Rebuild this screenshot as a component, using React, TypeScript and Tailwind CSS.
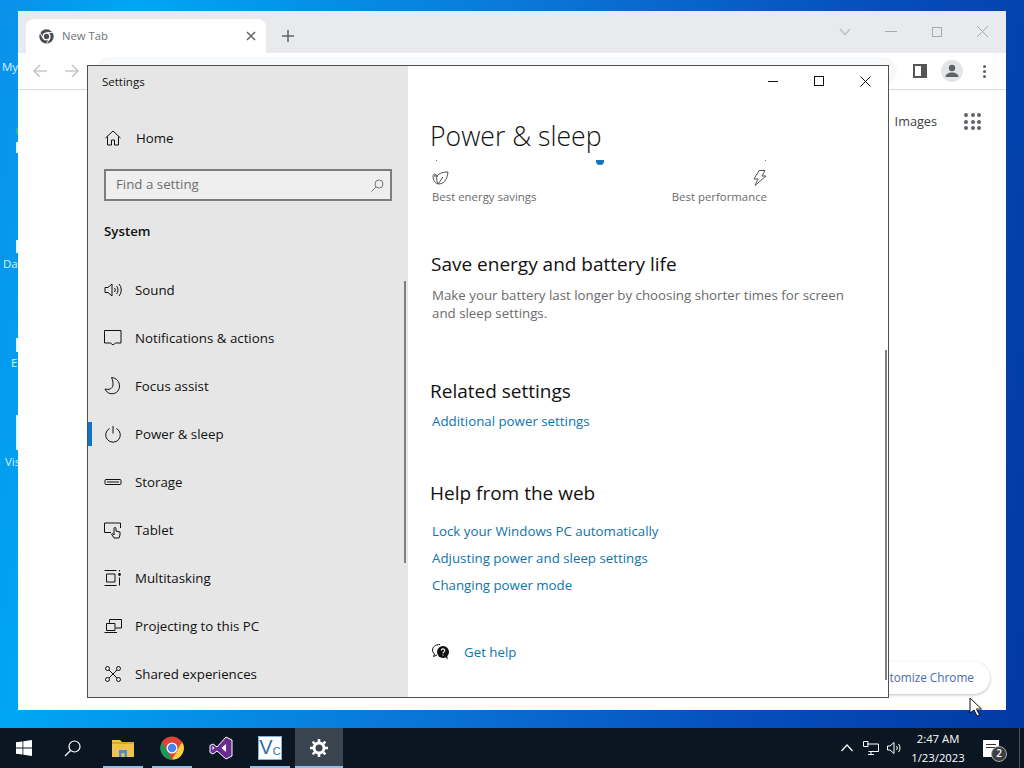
import React from "react";

const navItems = [
  { label: "Sound", icon: "sound" },
  { label: "Notifications & actions", icon: "notify" },
  { label: "Focus assist", icon: "moon" },
  { label: "Power & sleep", icon: "power", active: true },
  { label: "Storage", icon: "storage" },
  { label: "Tablet", icon: "tablet" },
  { label: "Multitasking", icon: "multi" },
  { label: "Projecting to this PC", icon: "project" },
  { label: "Shared experiences", icon: "shared" },
];

function NavIcon({ name }: { name: string }) {
  const common = { width: 18, height: 18, viewBox: "0 0 18 18", fill: "none", stroke: "#111", strokeWidth: 1 };
  switch (name) {
    case "sound":
      return (
        <svg {...common}>
          <path d="M1 6.500h3L8 3v12l-4-3.500H1z" />
          <path d="M10.500 7a3 3 0 0 1 0 4M12.500 5a6 6 0 0 1 0 8M15 3a9 9 0 0 1 0 12" />
        </svg>
      );
    case "notify":
      return (
        <svg {...common}>
          <path d="M.500 1.500h16.500v12.500h-5.500L9 16l-2.500-2H.500z" />
        </svg>
      );
    case "moon":
      return (
        <svg {...common}>
          <path d="M7.500 .500c5 .5 8 4 8 8.500a7.500 7.500 0 0 1-14.500 3c4 1 7.500 0 8-4 .3-2.500-.5-5.500-1.500-7.500z" />
        </svg>
      );
    case "power":
      return (
        <svg {...common}>
          <path d="M9 1v7.500M5.500 3.500a7.300 7.300 0 1 0 7 0" />
        </svg>
      );
    case "storage":
      return (
        <svg {...common}>
          <rect x="1" y="6.500" width="16" height="5" rx="1" />
          <path d="M3 9h12" strokeWidth="1" />
        </svg>
      );
    case "tablet":
      return (
        <svg {...common}>
          <path d="M7 11.500H.500v-9.500h16V7" />
          <path d="M10 17l-2.500-4 1-.5 1.500 1.500V7.500a1 1 0 0 1 2 0V10l4 1v3l-1 3z" fill="#e6e6e6" />
        </svg>
      );
    case "multi":
      return (
        <svg {...common}>
          <path d="M.500 1.500h12M.500 16.500h12M2.500 5h8.500v8H2.500zM15.500 8.500v8" />
          <circle cx="15.500" cy="5.500" r="1.400" fill="#111" stroke="none" />
          <path d="M15.500 1v1.500" />
        </svg>
      );
    case "project":
      return (
        <svg {...common}>
          <path d="M5.500 6V2.500h12v8.500h-6" />
          <path d="M2.500 6.500h8.500v7H2.500zM.500 15.500h12.500" />
        </svg>
      );
    default:
      return (
        <svg {...common}>
          <circle cx="3.500" cy="3.500" r="2" />
          <circle cx="14.500" cy="3.500" r="2" />
          <circle cx="3.500" cy="14.500" r="2" />
          <circle cx="14.500" cy="14.500" r="2" />
          <path d="M5 5l8 8M13 5l-8 8" />
        </svg>
      );
  }
}

function ChromeLogo({ size }: { size: number }) {
  return (
    <svg width={size} height={size} viewBox="0 0 48 48">
      <circle cx="24" cy="24" r="23" fill="#db4437" />
      <path d="M24 47A23 23 0 0 1 4 12.500L15 31l9 16z" fill="#0f9d58" />
      <path d="M24 47l11-19 9-16.500A23 23 0 0 1 24 47z" fill="#ffcd40" />
      <path d="M4 12.500L15 31l9-15h20A23 23 0 0 0 4 12.500z" fill="#db4437" />
      <circle cx="24" cy="24" r="11" fill="#fff" />
      <circle cx="24" cy="24" r="8.500" fill="#4285f4" />
    </svg>
  );
}

function ChromeWindow() {
  return (
    <div className="absolute left-[18px] top-[11px] flex h-[699px] w-[988px] flex-col bg-white">
      <div className="flex h-[42px] items-end bg-[#e8eaed] pl-2">
        <div className="flex h-[34px] w-[240px] items-center rounded-t-lg bg-white pl-[13px] pr-[10px]">
          <svg width="15" height="15" viewBox="0 0 48 48">
            <circle cx="24" cy="24" r="23" fill="#4a4d51" />
            <circle cx="24" cy="24" r="13" fill="#fff" />
            <circle cx="24" cy="24" r="8.500" fill="#4a4d51" />
            <path d="M24 11h20M13 30L3 12M35 30L24 47" stroke="#fff" strokeWidth="3" />
          </svg>
          <span className="ml-2 flex-1 text-[11.300px] text-[#6f7275]">New Tab</span>
          <svg width="10" height="10" viewBox="0 0 10 10" stroke="#5f6368" strokeWidth="1.500">
            <path d="M1 1l8 8M9 1L1 9" />
          </svg>
        </div>
        <div className="ml-4 flex h-[34px] items-center">
          <svg width="12" height="12" viewBox="0 0 12 12" stroke="#5f6368" strokeWidth="1.500">
            <path d="M6 0v12M0 6h12" />
          </svg>
        </div>
        <div className="ml-auto flex h-full items-center pb-[1px] pr-[17px]">
          <svg width="12" height="8" viewBox="0 0 12 8" fill="none" stroke="#b9bbbe" strokeWidth="1.200">
            <path d="M1 1l5 5.500L11 1" />
          </svg>
          <div className="ml-[34px] h-px w-[12px] bg-[#a9abae]" />
          <div className="ml-[35px] h-[10px] w-[10px] border border-[#a9abae]" />
          <svg className="ml-[34px]" width="13" height="13" viewBox="0 0 13 13" stroke="#a9abae" strokeWidth="1">
            <path d="M1 1l11 11M12 1L1 12" />
          </svg>
        </div>
      </div>
      <div className="flex h-[37px] items-center border-b border-[#dadce0] pl-[15px] pr-[20px]">
        <svg width="14" height="14" viewBox="0 0 14 14" fill="none" stroke="#c6c8ca" strokeWidth="1.600">
          <path d="M14 7H1M7 1L1 7l6 6" />
        </svg>
        <svg className="ml-[18px]" width="14" height="14" viewBox="0 0 14 14" fill="none" stroke="#c6c8ca" strokeWidth="1.600">
          <path d="M0 7h13M7 1l6 6-6 6" />
        </svg>
        <div className="mx-[16px] h-7 flex-1 rounded-full bg-[#f7f8f9]" />
        <div className="h-[14px] w-[14px] border-2 border-r-[6px] border-[#555]" />
        <div className="ml-[14px] flex h-[22px] w-[22px] items-center justify-center rounded-full bg-[#e3e5e8]">
          <svg width="14" height="14" viewBox="0 0 14 14" fill="#5f6368">
            <circle cx="7" cy="4" r="3.200" />
            <path d="M0.500 13c0-3 3-4.500 6.500-4.500s6.500 1.500 6.500 4.500z" />
          </svg>
        </div>
        <div className="ml-[20px] flex flex-col gap-[2px]">
          <div className="h-[3px] w-[3px] rounded-full bg-[#5f6368]" />
          <div className="h-[3px] w-[3px] rounded-full bg-[#5f6368]" />
          <div className="h-[3px] w-[3px] rounded-full bg-[#5f6368]" />
        </div>
      </div>
      <div className="flex items-center justify-end pr-[25px] pt-[22px]">
        <span className="text-[12.700px] text-[#3c4043]">Images</span>
        <div className="ml-[27px] grid grid-cols-3 gap-[2.500px]">
          {Array.from({ length: 9 }).map((_, i) => (
            <div key={i} className="h-[4px] w-[4px] rounded-full bg-[#5f6368]" />
          ))}
        </div>
      </div>
      <div className="absolute bottom-[16px] right-[16px] flex h-[32px] w-[150px] items-center justify-end rounded-full bg-white pr-[16px] text-[11.800px] text-[#4a6bb0] shadow-[0_1px_3px_rgba(60,64,67,0.35)]">
        Customize Chrome
      </div>
    </div>
  );
}

function SettingsWindow() {
  return (
    <div className="absolute left-[87px] top-[65px] flex h-[633px] w-[802px] border border-[#4f4f4f] bg-white">
      <div className="relative w-[320px] overflow-hidden bg-[#e6e6e6]">
        <div className="flex h-8 items-center pl-[14px] text-[11.500px] text-[#111]">Settings</div>
        <div className="mt-4 flex h-12 items-center pl-[17px]">
          <svg width="16" height="16" viewBox="0 0 16 16" fill="none" stroke="#111" strokeWidth="1">
            <path d="M0.500 8L8 1l7.500 7M2.500 6.500v8.500h4v-5h3v5h4V6.500" />
          </svg>
          <span className="ml-[15px] mt-px text-[13.300px] text-[#111]">Home</span>
        </div>
        <div className="ml-4 mt-[7px] flex h-8 w-[288px] items-center border-2 border-[#7d7d7d] bg-[#efefef] pl-[10px] pr-[6px]">
          <span className="flex-1 text-[13.300px] text-[#6e6e6e]">Find a setting</span>
          <svg width="13" height="13" viewBox="0 0 13 13" fill="none" stroke="#777" strokeWidth="1">
            <circle cx="8" cy="5" r="4" />
            <path d="M5 8l-4.500 4.500" />
          </svg>
        </div>
        <div className="flex h-[60px] items-center pl-4 pt-px text-[13.300px] font-semibold text-[#111]">System</div>
        <div className="mt-[5px]">
          {navItems.map((item) => (
            <div key={item.label} className="relative flex h-12 items-center pl-4">
              {item.active && <div className="absolute left-0 top-3 h-6 w-1 bg-[#0f74c4]" />}
              <NavIcon name={item.icon} />
              <span className="ml-[13px] mt-px text-[13.300px] text-[#111]">{item.label}</span>
            </div>
          ))}
        </div>
        <div className="absolute right-[2px] top-[215px] h-[282px] w-[2px] bg-[#808080]" />
      </div>
      <div className="relative flex-1 overflow-hidden pl-[22px]">
        <div className="pt-[50px]">
          <h1 className="h-10 text-[26.600px] font-light leading-10 text-[#111]">Power &amp; sleep</h1>
        </div>
        <div className="relative mt-1 h-[540px] overflow-hidden">
          <div className="relative flex h-1 w-[336px] justify-between pl-[6px]">
            <div className="h-px w-px bg-[#777]" />
            <div className="absolute left-[166px] top-0 h-[5px] w-2 rounded-b-full bg-[#0f74c4]" />
            <div className="h-px w-px bg-[#777]" />
          </div>
          <div className="ml-[2px] mt-[6px] flex w-[335px] justify-between text-[11.400px] text-[#6b6b6b]">
            <div className="flex flex-col gap-[3px]">
              <svg width="17" height="16" viewBox="0 0 17 16" fill="none" stroke="#555" strokeWidth="1">
                <path d="M6 14c-3-1-5-4-5-7 0-2 1-3 1-3l4 2-4 0M6 14c6 0 9-4 10-12-5 0-9 1-11 4-1 2 0 6 1 8zM6 14l5-7" />
              </svg>
              <span className="leading-4">Best energy savings</span>
            </div>
            <div className="flex flex-col items-end gap-[3px]">
              <svg width="14" height="16" viewBox="0 0 14 16" fill="none" stroke="#555" strokeWidth="1">
                <path d="M6 .500h6L9 6h4L2 15.500 5 9H1z" />
              </svg>
              <span className="leading-4">Best performance</span>
            </div>
          </div>
          <h2 className="ml-px mt-[45px] text-[19px] leading-7 text-[#111]">Save energy and battery life</h2>
          <p className="ml-[2px] mt-2 w-[430px] text-[13.300px] leading-[18px] text-[#6b6b6b]">
            Make your battery last longer by choosing shorter times for screen and sleep settings.
          </p>
          <h2 className="mt-[55px] text-[19px] leading-7 text-[#111]">Related settings</h2>
          <div className="ml-[2px] mt-[6px] text-[13.300px] leading-5 text-[#0f74ac]">Additional power settings</div>
          <h2 className="mt-12 text-[19px] leading-7 text-[#111]">Help from the web</h2>
          <div className="ml-[2px] mt-[14px] flex flex-col gap-[7px] text-[13.300px] leading-5 text-[#0f74ac]">
            <span>Lock your Windows PC automatically</span>
            <span>Adjusting power and sleep settings</span>
            <span>Changing power mode</span>
          </div>
          <div className="ml-[2px] mt-[47px] flex h-5 items-center text-[13.300px] text-[#0f74ac]">
            <svg width="18" height="16" viewBox="0 0 18 16">
              <path d="M8 0.500C3.500 0.500 0.500 3 0.500 6c0 1.500.8 3 2 4l-1 2.500 3.500-1.500" fill="none" stroke="#111" />
              <circle cx="11" cy="8" r="6" fill="#111" />
              <path d="M13 12.500l3 3-1-4z" fill="#111" />
              <path d="M9.300 6.500a1.700 1.700 0 1 1 2.500 1.500c-.6.300-.8.600-.8 1.300M11 10.500v1" fill="none" stroke="#fff" strokeWidth="1.200" />
            </svg>
            <span className="ml-[14px] mt-px">Get help</span>
          </div>
        </div>
        <div className="absolute right-px top-[284px] h-[330px] w-[2px] bg-[#808080]" />
        <div className="absolute right-0 top-0 flex h-[30px] items-center">
          <div className="flex w-[46px] justify-center">
            <div className="h-px w-[10px] bg-[#111]" />
          </div>
          <div className="flex w-[46px] justify-center">
            <div className="h-[10px] w-[10px] border border-[#111]" />
          </div>
          <div className="flex w-[46px] justify-center">
            <svg width="11" height="11" viewBox="0 0 11 11" stroke="#111" strokeWidth="1">
              <path d="M0.500 0.500l10 10M10.500 0.500l-10 10" />
            </svg>
          </div>
        </div>
      </div>
    </div>
  );
}

function Underline() {
  return <div className="absolute bottom-0 left-[5px] right-[4px] h-[2px] bg-[#8fc0e8]" />;
}

function Taskbar() {
  return (
    <div className="flex h-10 items-center bg-[#0a1622] text-white">
      <div className="flex h-full w-12 items-center justify-center">
        <svg width="16" height="16" viewBox="0 0 16 16" fill="#fff">
          <path d="M0 2.300l6.500-.9v6.200H0zM7.300 1.300L16 0v7.600H7.300zM0 8.400h6.500v6.200L0 13.700zM7.300 8.400H16V16l-8.700-1.300z" />
        </svg>
      </div>
      <div className="flex h-full w-12 items-center justify-center">
        <svg width="17" height="17" viewBox="0 0 17 17" fill="none" stroke="#fff" strokeWidth="1.200">
          <circle cx="10.500" cy="6.500" r="5.500" />
          <path d="M6.500 10.500L1 16" />
        </svg>
      </div>
      <div className="relative ml-[2px] flex h-full w-[49px] items-center justify-center">
        <svg width="22" height="19" viewBox="0 0 22 19">
          <path d="M0 1h8l2 2h12v15H0z" fill="#f0c34e" />
          <path d="M0 3h22v2H0z" fill="#d9a62e" />
          <path d="M7 11h8v7H7z" fill="#4d8fc9" />
          <path d="M9.500 14h3v4h-3z" fill="#f0c34e" />
        </svg>
        <Underline />
      </div>
      <div className="relative flex h-full w-[49px] items-center justify-center">
        <ChromeLogo size={24} />
        <Underline />
      </div>
      <div className="flex h-full w-[49px] items-center justify-center">
        <svg width="24" height="24" viewBox="0 0 24 24">
          <path d="M17 1l6 3v16l-6 3-9-8-4 3-3-1.500v-7L4 8l4 3z" fill="#6a2c91" stroke="#fff" strokeWidth="1" />
          <path d="M17 8l-4.500 4 4.500 4zM3.500 10v4l2-2z" fill="#fff" />
        </svg>
      </div>
      <div className="relative flex h-full w-[49px] items-center justify-center">
        <div className="flex h-6 w-6 items-start justify-center bg-white pl-px font-['Liberation_Sans',sans-serif] text-[#2f6fa8] shadow-[inset_0_0_0_1px_#7fb3dc]">
          <span className="text-[20px] leading-[22px]">V</span>
          <span className="mt-[9px] text-[11px] leading-3">C</span>
        </div>
        <Underline />
      </div>
      <div className="relative ml-px flex h-full w-12 items-center justify-center bg-[#3a444e]">
        <svg width="18" height="18" viewBox="0 0 18 18" fill="none" stroke="#fff" strokeWidth="3">
          <circle cx="9" cy="9" r="5" />
          <path d="M9 0v3M9 15v3M0 9h3M15 9h3M2.600 2.600l2.100 2.100M13.300 13.300l2.100 2.100M15.400 2.600l-2.100 2.100M4.700 13.300l-2.100 2.100" strokeWidth="2.600" />
        </svg>
        <div className="absolute bottom-0 left-0 right-0 h-[2px] bg-[#8fc0e8]" />
      </div>
      <div className="ml-auto flex h-full items-center">
        <svg width="12" height="8" viewBox="0 0 12 8" fill="none" stroke="#fff" strokeWidth="1.200">
          <path d="M.500 7l5.500-6 5.500 6" />
        </svg>
        <svg className="ml-[10px]" width="16" height="14" viewBox="0 0 16 14" fill="none" stroke="#fff" strokeWidth="1">
          <path d="M4 3h11.500v7.500h-10M5 .500H.500v5H5zM8 10.500v3M5 13.500h6" />
        </svg>
        <svg className="ml-[8px]" width="16" height="14" viewBox="0 0 16 14" fill="none" stroke="#fff" strokeWidth="1">
          <path d="M.500 5h2.500L7 1.500v11L3 9H.500zM9.500 5a3 3 0 0 1 0 4M11.500 3a6 6 0 0 1 0 8" />
        </svg>
        <div className="ml-[7px] flex w-[56px] flex-col items-center text-[11.300px] leading-[19px]">
          <span>2:47 AM</span>
          <span>1/23/2023</span>
        </div>
        <div className="relative ml-[17px] mr-[20px] h-[17px] w-4 bg-white">
          <div className="mx-[3px] mt-[4px] h-px bg-[#333]" />
          <div className="mx-[3px] mt-[2px] h-px bg-[#333]" />
          <div className="absolute -bottom-[5px] -right-2 flex h-4 w-4 items-center justify-center rounded-full border border-[#aaa] bg-[#3c3f42] text-[10px] font-semibold">
            2
          </div>
        </div>
        <div className="h-full w-px bg-[#4a525a]" />
        <div className="w-1" />
      </div>
    </div>
  );
}

export default function App() {
  return (
    <div className="flex h-[768px] w-[1024px] flex-col overflow-hidden font-['Open_Sans','Noto_Sans',sans-serif]">
      <div className="relative flex-1 overflow-hidden bg-[linear-gradient(100deg,#0a90ea_0%,#00a6f2_12%,#0a78d8_45%,#0550bc_75%,#0238a4_100%)]">
        <span className="absolute left-[2px] top-[58px] text-[11.500px] text-[#d5f0ff]">My</span>
        <span className="absolute left-[3px] top-[255px] text-[11.500px] text-[#d5f0ff]">Da</span>
        <span className="absolute left-[11px] top-[354px] text-[11.500px] text-[#d5f0ff]">E</span>
        <span className="absolute left-[5px] top-[453px] text-[11.500px] text-[#d5f0ff]">Vis</span>
        <div className="absolute left-[16px] top-[128px] h-[6px] w-[2px] bg-[#2fb58a]" />
        <div className="absolute left-[16px] top-[142px] h-[11px] w-[2px] bg-[#e4f6ff]" />
        <div className="absolute left-[16px] top-[240px] h-[13px] w-[2px] bg-[#e4f6ff]" />
        <div className="absolute left-[16px] top-[338px] h-[14px] w-[2px] bg-[#e4f6ff]" />
        <div className="absolute left-[16px] top-[415px] h-[35px] w-[2px] bg-[#e4f6ff]" />
        <ChromeWindow />
        <SettingsWindow />
        <svg className="absolute left-[969px] top-[697px]" width="14" height="21" viewBox="0 0 14 21">
          <path d="M1 1v15l4-3 3 6 2.500-1-3-6h5z" fill="#fff" stroke="#111" strokeWidth="1" />
        </svg>
      </div>
      <Taskbar />
    </div>
  );
}
